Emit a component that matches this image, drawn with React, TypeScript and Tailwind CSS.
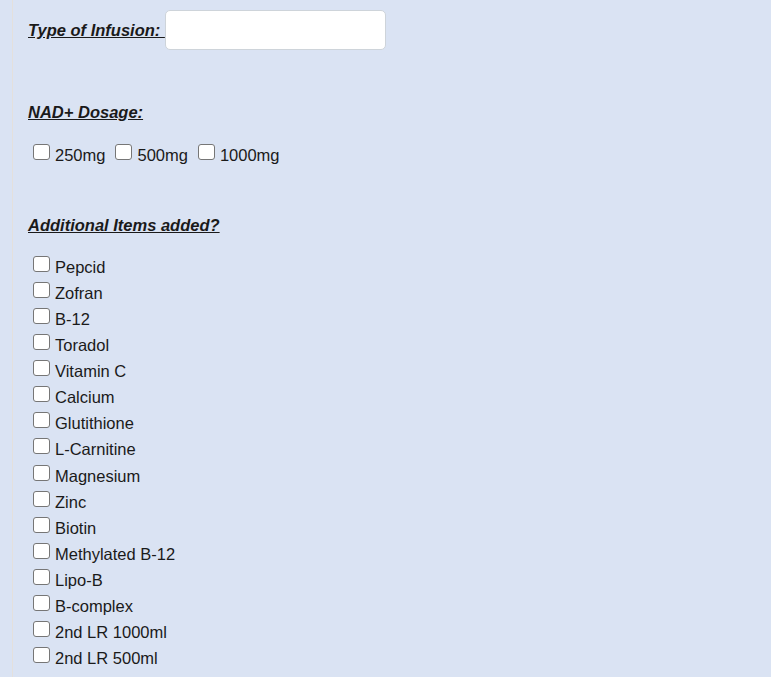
import React from "react";

const items = [
  "Pepcid",
  "Zofran",
  "B-12",
  "Toradol",
  "Vitamin C",
  "Calcium",
  "Glutithione",
  "L-Carnitine",
  "Magnesium",
  "Zinc",
  "Biotin",
  "Methylated B-12",
  "Lipo-B",
  "B-complex",
  "2nd LR 1000ml",
  "2nd LR 500ml",
];

function Box() {
  return (
    <span className="mt-[2px] inline-block h-[16px] w-[17px] shrink-0 rounded-[3px] border border-[#767676] bg-white" />
  );
}

export default function App() {
  return (
    <div
      className="min-h-screen bg-[#dae3f3] text-[#1a1a1a]"
      style={{ fontFamily: '"Liberation Sans", Arial, sans-serif' }}
    >
      <div className="ml-[12px] min-h-[677px] border-l border-[#e4e0dc] pl-[15px]">
        <div className="flex items-center pt-[10px]">
          <span className="text-[16.5px] font-bold italic underline whitespace-pre">
            {"Type of Infusion: "}
          </span>
          <div className="h-[40px] w-[221px] rounded-[5px] border border-[#ced4da] bg-white" />
        </div>

        <div className="mt-[50px] text-[16.5px] leading-[24px] font-bold italic underline">
          NAD+ Dosage:
        </div>

        <div className="mt-[18px] flex text-[16.5px] leading-[26px]">
          {["250mg", "500mg", "1000mg"].map((t) => (
            <label key={t} className="ml-[5px] mr-[5px] flex items-start">
              <Box />
              <span className="ml-[5px]">{t}</span>
            </label>
          ))}
        </div>

        <div className="mt-[45px] text-[16.5px] leading-[24px] font-bold italic underline">
          Additional Items added?
        </div>

        <div className="mt-[17px] flex flex-col text-[16.5px] leading-[26.07px]">
          {items.map((t) => (
            <label key={t} className="ml-[5px] flex items-start">
              <Box />
              <span className="ml-[5px]">{t}</span>
            </label>
          ))}
        </div>
      </div>
    </div>
  );
}
